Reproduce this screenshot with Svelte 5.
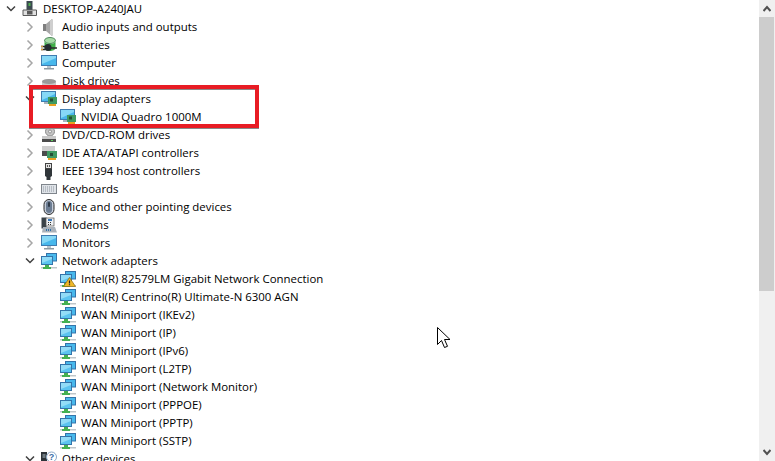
<script>
  const rows = [
    { label: 'DESKTOP-A240JAU', level: 0, open: true, icon: 'desktop' },
    { label: 'Audio inputs and outputs', level: 1, icon: 'audio' },
    { label: 'Batteries', level: 1, icon: 'battery' },
    { label: 'Computer', level: 1, icon: 'monitor' },
    { label: 'Disk drives', level: 1, icon: 'disk' },
    { label: 'Display adapters', level: 1, open: true, icon: 'display' },
    { label: 'NVIDIA Quadro 1000M', level: 2, icon: 'display' },
    { label: 'DVD/CD-ROM drives', level: 1, icon: 'dvd' },
    { label: 'IDE ATA/ATAPI controllers', level: 1, icon: 'ide' },
    { label: 'IEEE 1394 host controllers', level: 1, icon: 'plug' },
    { label: 'Keyboards', level: 1, icon: 'keyboard' },
    { label: 'Mice and other pointing devices', level: 1, icon: 'mouse' },
    { label: 'Modems', level: 1, icon: 'modem' },
    { label: 'Monitors', level: 1, icon: 'monitor' },
    { label: 'Network adapters', level: 1, open: true, icon: 'network' },
    { label: 'Intel(R) 82579LM Gigabit Network Connection', level: 2, icon: 'network', warn: true },
    { label: 'Intel(R) Centrino(R) Ultimate-N 6300 AGN', level: 2, icon: 'network' },
    { label: 'WAN Miniport (IKEv2)', level: 2, icon: 'network' },
    { label: 'WAN Miniport (IP)', level: 2, icon: 'network' },
    { label: 'WAN Miniport (IPv6)', level: 2, icon: 'network' },
    { label: 'WAN Miniport (L2TP)', level: 2, icon: 'network' },
    { label: 'WAN Miniport (Network Monitor)', level: 2, icon: 'network' },
    { label: 'WAN Miniport (PPPOE)', level: 2, icon: 'network' },
    { label: 'WAN Miniport (PPTP)', level: 2, icon: 'network' },
    { label: 'WAN Miniport (SSTP)', level: 2, icon: 'network' },
    { label: 'Other devices', level: 1, open: true, icon: 'other' }
  ];
</script>

{#snippet icon(name, warn)}
  <svg class="icon" viewBox="0 0 16 16" width="16" height="16">
    {#if name === 'desktop'}
      <rect x="4.500" y="0" width="6" height="9" fill="#3c4a50" />
      <rect x="6.500" y="2" width="2" height="3" fill="#4fae4f" />
      <path d="M1 9h13.500v5.500H1z" fill="#e0e0e0" stroke="#5a5a5a" />
      <rect x="5" y="10" width="5.500" height="3.500" fill="#5a5a5a" />
    {:else if name === 'audio'}
      <rect x="2" y="5" width="3" height="7" fill="#7f7f7f" />
      <path d="M5 5l6-5v17l-6-5z" fill="#a8a8a8" />
      <path d="M9 1.500l3-1.500v17l-3-1.500z" fill="#cfcfcf" />
    {:else if name === 'battery'}
      <ellipse cx="9" cy="3.500" rx="5.500" ry="3" fill="#a6dca6" stroke="#2f6f3f" stroke-width="0.800" />
      <path d="M3.500 4v7c0 2 3 3 5.500 3s5.500-1 5.500-3V4c0 2-3 3-5.500 3S3.500 6 3.500 4z" fill="#3fae48" />
      <circle cx="7" cy="10.500" r="3.500" fill="#252c30" />
      <path d="M0 9.500h4M0 12.500h4M10 11h6" stroke="#2a2a2a" stroke-width="1.300" />
      <path d="M0 9.500h2M0 12.500h2" stroke="#d4a040" stroke-width="1.300" />
    {:else if name === 'monitor'}
      <rect x="0.500" y="0.500" width="15" height="10" fill="#48b8ec" stroke="#3f7cb0" />
      <path d="M1 1h14v2L1 9z" fill="#86d8f6" />
      <path d="M6 11h4v2H6z" fill="#b8c4cc" />
      <path d="M3 13h10v1.500H3z" fill="#8e9aa2" />
    {:else if name === 'disk'}
      <path d="M1 9c0-2 3-3 7-3s7 1 7 3v4H1z" fill="#c8c8c8" />
      <ellipse cx="8" cy="8.500" rx="7" ry="2.500" fill="#9a9a9a" />
      <rect x="1" y="12" width="14" height="3" fill="#444" />
    {:else if name === 'display'}
      <rect x="0.500" y="0.500" width="14" height="10" fill="#48b8ec" stroke="#3f7cb0" />
      <path d="M1 1h13v2L1 9z" fill="#86d8f6" />
      <path d="M3 11h5v2H3z" fill="#a8b4bc" />
      <rect x="7" y="6" width="9" height="7" fill="#3f9a62" />
      <rect x="9" y="7.500" width="3" height="3" fill="#234f35" />
      <rect x="8" y="13" width="7" height="2" fill="#e8a020" />
    {:else if name === 'dvd'}
      <ellipse cx="9" cy="4.500" rx="4.500" ry="4.500" fill="#c4c4c4" stroke="#8c8c8c" />
      <circle cx="9" cy="4.500" r="1.500" fill="#f0f0f0" stroke="#777" stroke-width="0.700" />
      <path d="M1 9h14v6H1z" fill="#c9c9c9" />
      <path d="M1 12h14v3H1z" fill="#4c4c4c" />
      <rect x="10" y="13" width="2" height="1" fill="#5fd05f" />
    {:else if name === 'ide'}
      <path d="M1 1h13v5H1z" fill="#cfcfcf" />
      <path d="M1 6h8v5H1z" fill="#4c4c4c" />
      <rect x="6" y="6" width="10" height="7" fill="#3f9a62" />
      <rect x="9" y="8" width="3" height="3" fill="#234f35" />
      <rect x="7" y="13" width="8" height="2" fill="#e8a020" />
    {:else if name === 'plug'}
      <rect x="4.500" y="0.500" width="6" height="5" fill="#e4e4e4" stroke="#444" />
      <rect x="6" y="2" width="1" height="2" fill="#555" />
      <rect x="8" y="2" width="1" height="2" fill="#555" />
      <path d="M4 6h7v7l-1.500 1v3h-4v-3L4 13z" fill="#30363a" />
    {:else if name === 'keyboard'}
      <rect x="0.500" y="3.500" width="15" height="9" fill="#dfe3e8" stroke="#7f858c" />
      <path d="M2 6h12M2 8h12M2 10h12" stroke="#8e96a0" stroke-dasharray="1 1" />
    {:else if name === 'mouse'}
      <rect x="3" y="0.500" width="10" height="15" rx="5" fill="#c4ccd8" stroke="#2a2a2a" />
      <rect x="5" y="2" width="6" height="12" rx="3" fill="#6b7c92" />
      <rect x="7" y="3" width="2" height="5" rx="1" fill="#2f3a48" />
    {:else if name === 'modem'}
      <rect x="0.500" y="0.500" width="5" height="11" fill="#3a4248" />
      <rect x="5" y="1" width="8" height="8" fill="#eef0f2" stroke="#555" stroke-width="0.700" />
      <rect x="7" y="2" width="4" height="2" fill="#3b78b8" />
      <path d="M7 5.500h4M7 7.500h4" stroke="#333" stroke-dasharray="1 1" />
      <path d="M2 10h12l2 5.500H1z" fill="#aab2ba" />
      <path d="M5 13h6" stroke="#2f6fa8" stroke-width="2" stroke-dasharray="1 1" />
    {:else if name === 'network'}
      <rect x="5.500" y="0.500" width="10" height="7.500" fill="#48b8ec" stroke="#3474aa" />
      <rect x="0.500" y="3.500" width="11" height="8" fill="#5cc4f0" stroke="#3474aa" />
      <path d="M1 4h10v2L1 10z" fill="#92dcf7" />
      <path d="M0 14h16v1.500H0z" fill="#bfc6ca" />
      <path d="M4 12h4v2h2v2H2v-2h2z" fill="#45b052" />
    {:else if name === 'other'}
      <rect x="0" y="1" width="6" height="13" fill="#2d3338" />
      <rect x="1.500" y="3" width="3" height="4" fill="#6f7a80" />
      <circle cx="10.500" cy="6" r="5" fill="#fff" stroke="#8aa8c8" />
      <text class="glyph" x="10.500" y="9" text-anchor="middle">?</text>
    {/if}
    {#if warn}
      <path d="M9.500 6.500l6 9h-12z" fill="#f0b828" stroke="#8a6a10" stroke-width="0.700" />
      <path d="M9.500 9.500v3M9.500 13.200v1" stroke="#222" stroke-width="1.200" />
    {/if}
  </svg>
{/snippet}

<div class="page">
  <div class="tree">
    {#each rows as row}
      <div class="row level{row.level}">
        {#if row.level < 2}
          <span class="expander">
            {#if row.open}
              <svg viewBox="0 0 16 16" width="16" height="16"><path d="M4 5.500l4 4 4-4" fill="none" stroke="#404040" stroke-width="1.500" /></svg>
            {:else}
              <svg viewBox="0 0 16 16" width="16" height="16"><path d="M5.500 3.500l4.500 4.500-4.500 4.500" fill="none" stroke="#a6a6a6" stroke-width="1.500" /></svg>
            {/if}
          </span>
        {/if}
        {@render icon(row.icon, row.warn)}
        <span class="label">{row.label}</span>
      </div>
    {/each}
  </div>

  <div class="scrollbar">
    <div class="arrow">
      <svg viewBox="0 0 8 7" width="8" height="7"><path d="M0.500 6l3.500-4 3.500 4" fill="none" stroke="#505050" stroke-width="2" /></svg>
    </div>
    <div class="thumb"></div>
    <div class="rest"></div>
    <div class="arrow">
      <svg viewBox="0 0 8 7" width="8" height="7"><path d="M0.500 1l3.500 4 3.500-4" fill="none" stroke="#505050" stroke-width="2" /></svg>
    </div>
  </div>

  <div class="highlight"></div>

  <svg class="cursor" viewBox="0 0 13 23" width="13" height="23">
    <path d="M0.500 0.500v17l4-4 3 7 3-1.200-3-6.800h5.500z" fill="#fff" stroke="#000" />
  </svg>
</div>

<style>
  :global(body) {
    background: #fff;
  }

  .page {
    position: relative;
    display: flex;
    width: 775px;
    height: 461px;
    overflow: hidden;
    background: #fff;
  }

  .tree {
    flex: 1;
    font-family: 'Open Sans', 'Liberation Sans', sans-serif;
    font-size: 11.45px;
    color: #000;
  }

  .row {
    display: flex;
    align-items: center;
    height: 18px;
    white-space: nowrap;
  }
  .level0 {
    padding-left: 3px;
  }
  .level1 {
    padding-left: 22px;
  }
  .level2 {
    padding-left: 60px;
  }

  .expander {
    display: flex;
    width: 16px;
    height: 16px;
    margin-right: 3px;
  }

  .icon {
    flex: none;
    margin-right: 5px;
    overflow: visible;
  }

  .glyph {
    font-family: 'Liberation Sans', sans-serif;
    font-size: 9px;
    font-weight: 700;
    fill: #3a6ea8;
  }

  .label {
    line-height: 18px;
  }

  .scrollbar {
    display: flex;
    flex-direction: column;
    width: 16px;
    background: #f0f0f0;
  }
  .arrow {
    display: flex;
    align-items: center;
    justify-content: center;
    height: 17px;
    flex: none;
  }
  .thumb {
    height: 274px;
    width: 15px;
    background: #cdcdcd;
  }
  .rest {
    flex: 1;
  }

  .highlight {
    position: absolute;
    left: 29px;
    top: 85px;
    width: 222px;
    height: 35px;
    border: 4px solid #e81c24;
    box-shadow: 0 1px 0 #8a8a8a, inset 0 1px 0 #8a8a8a;
  }

  .cursor {
    position: absolute;
    left: 437px;
    top: 327px;
  }
</style>
